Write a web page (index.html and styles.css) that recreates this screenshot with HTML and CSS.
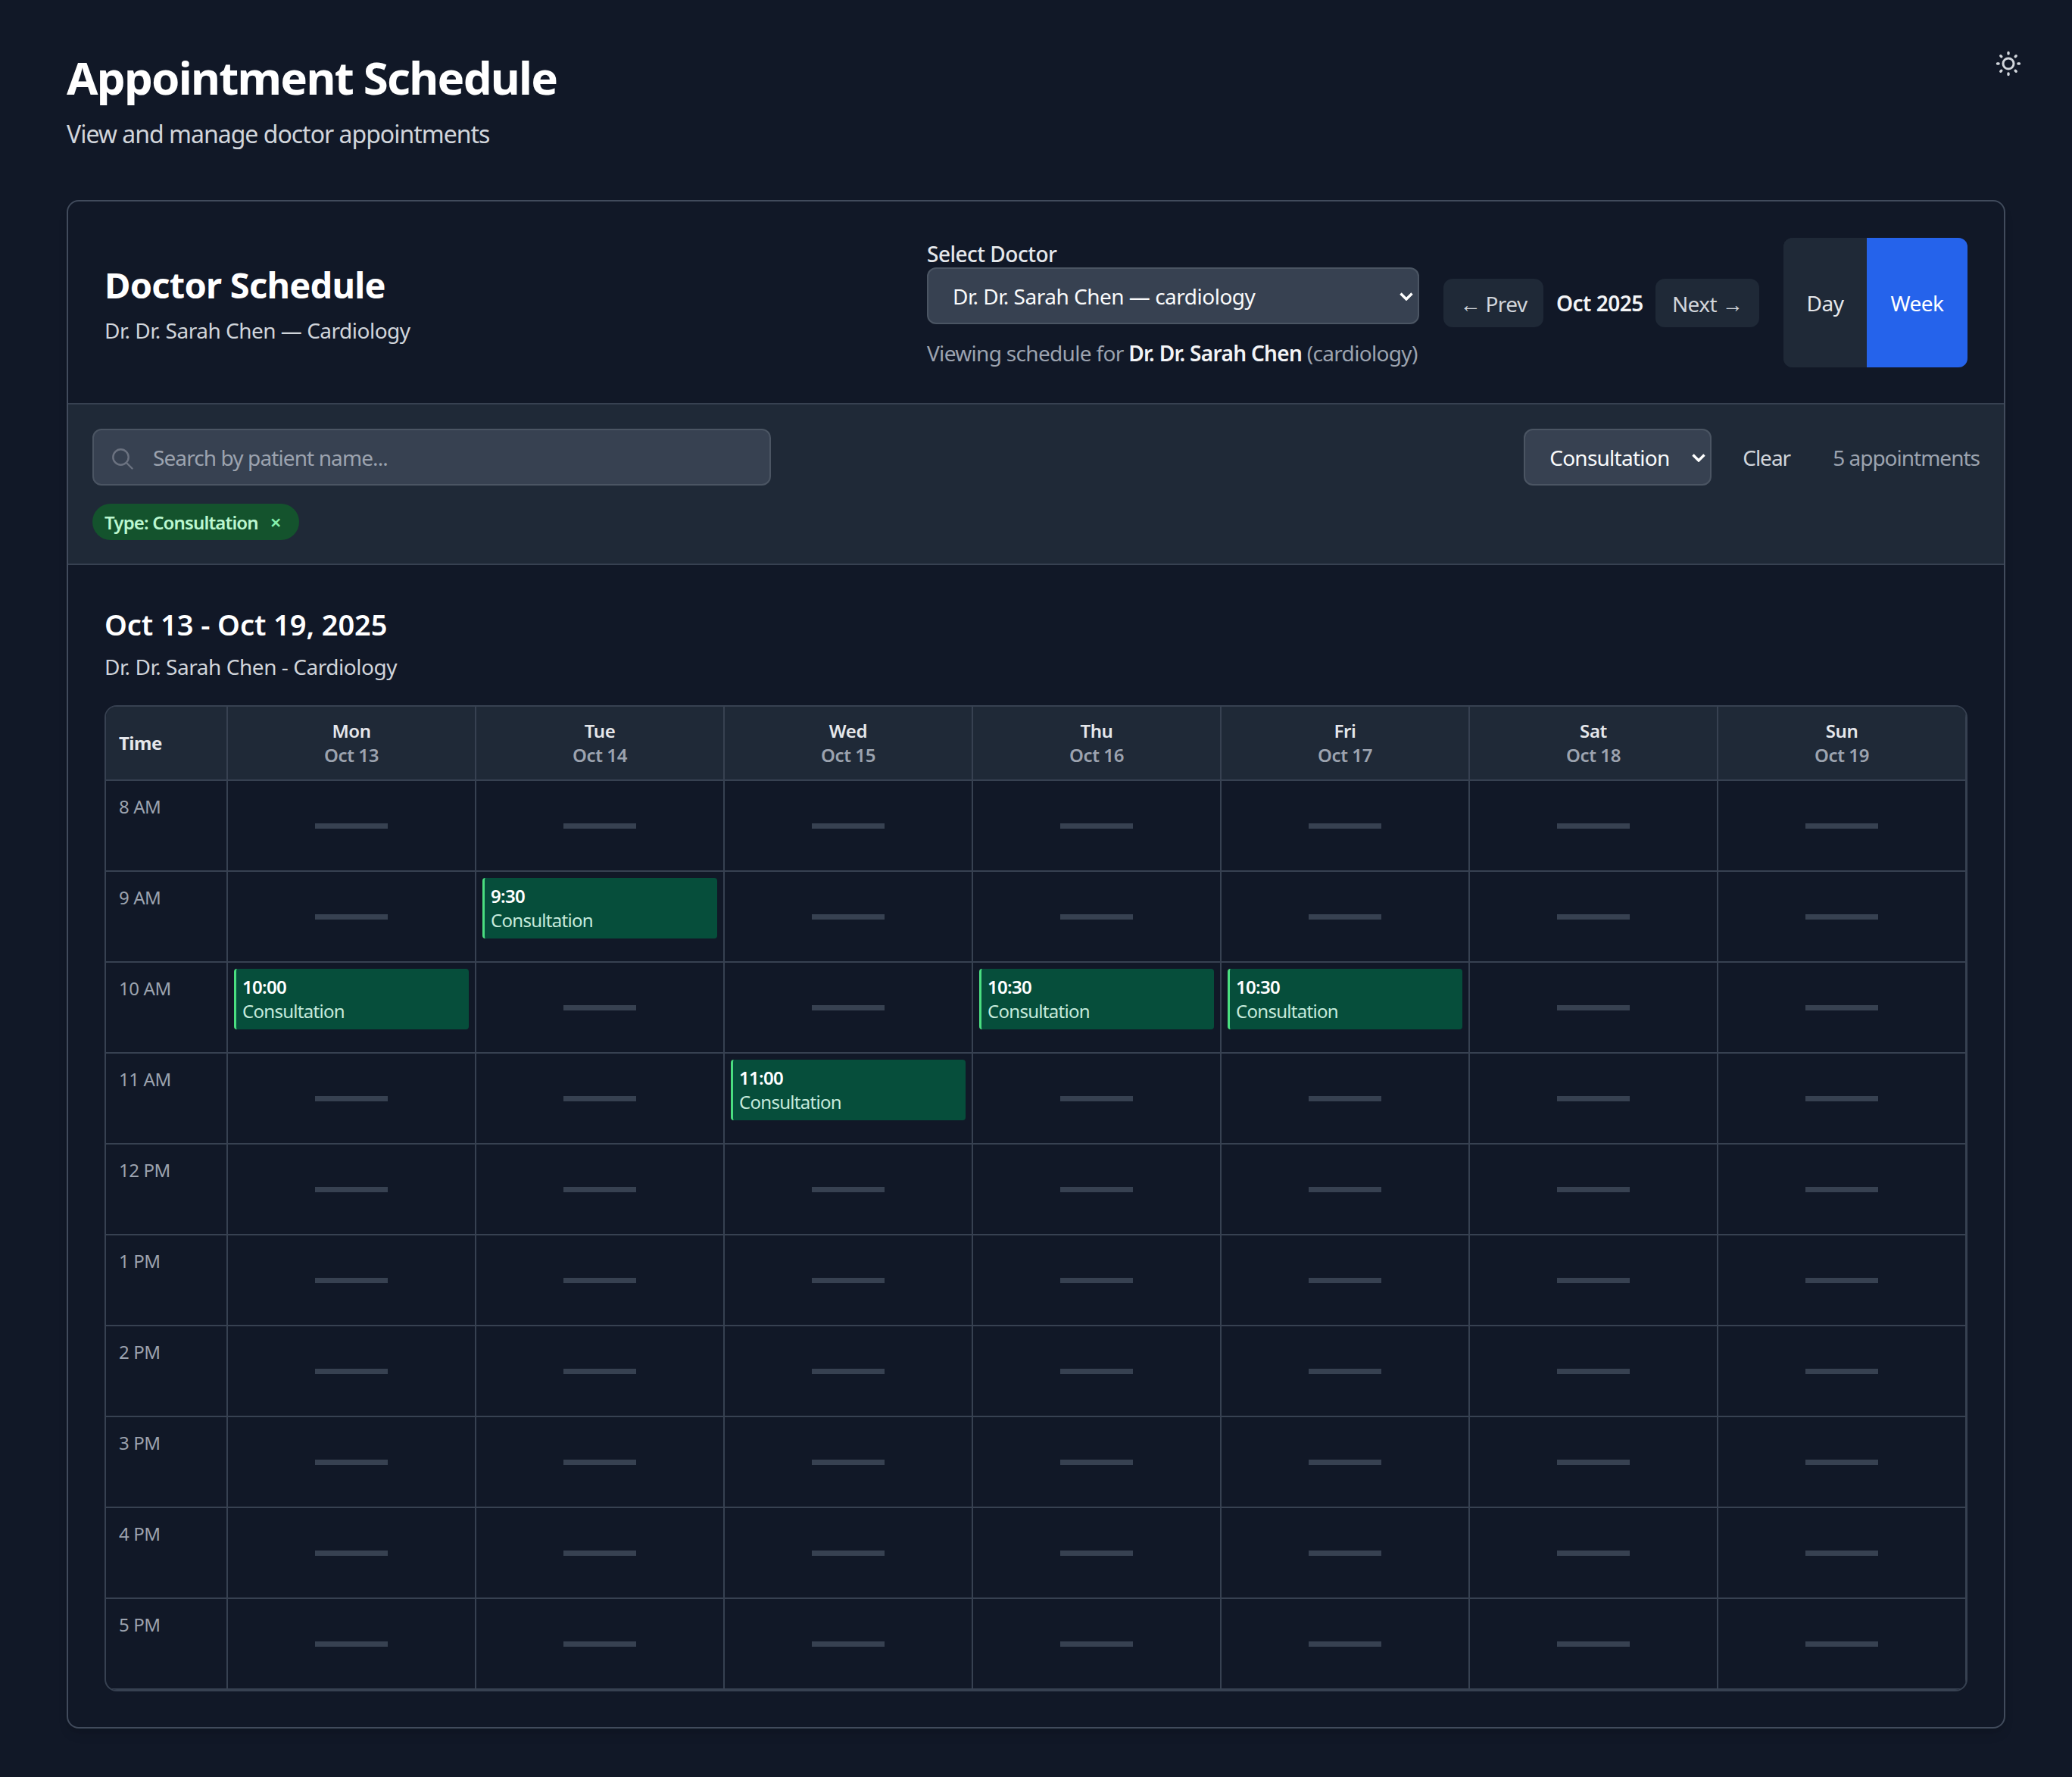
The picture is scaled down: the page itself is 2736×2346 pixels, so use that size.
FILE: index.html
```html
<!DOCTYPE html>
<html lang="en">
<head>
<meta charset="utf-8">
<title>Appointment Schedule</title>
<link rel="stylesheet" href="styles.css">
</head>
<body>
<button class="theme" aria-label="Toggle theme">
  <svg viewBox="0 0 34 34" width="34" height="34" fill="none" stroke="currentColor" stroke-width="3.4" stroke-linecap="round">
    <circle cx="17" cy="17" r="7" stroke-width="3"/>
    <path d="M17 2.5v1.6M17 29.9v1.6M2.5 17h1.6M29.9 17h1.6M6.8 6.8l1 1M26.2 26.2l1 1M6.8 27.2l1-1M26.2 7.8l1-1"/>
  </svg>
</button>
<header class="page-head">
  <h1>Appointment Schedule</h1>
  <p>View and manage doctor appointments</p>
</header>
<main class="card">
  <section class="card-head">
    <div class="head-title">
      <h2>Doctor Schedule</h2>
      <p>Dr. Dr. Sarah Chen — Cardiology</p>
    </div>
    <div class="head-tools">
      <div class="doctor">
        <label class="doctor-label" for="doc">Select Doctor</label>
        <div class="select-wrap">
          <select id="doc" class="select doctor-select"><option>Dr. Dr. Sarah Chen — cardiology</option></select>
          <svg class="chevron" viewBox="0 0 18 11" width="18" height="11" fill="none" stroke="currentColor" stroke-width="3.4"><path d="M1.5 1.5L9 9l7.5-7.5"/></svg>
        </div>
        <p class="viewing">Viewing schedule for <strong>Dr. Dr. Sarah Chen</strong> (cardiology)</p>
      </div>
      <div class="nav">
        <button class="nav-btn nav-prev">← Prev</button>
        <span class="nav-month">Oct 2025</span>
        <button class="nav-btn nav-next">Next →</button>
      </div>
      <div class="toggle">
        <button class="toggle-btn toggle-day">Day</button>
        <button class="toggle-btn toggle-week">Week</button>
      </div>
    </div>
  </section>
  <section class="filters">
    <div class="filter-row">
      <div class="search">
        <svg class="search-icon" viewBox="0 0 28 28" width="28" height="28" fill="none" stroke="currentColor" stroke-width="2.4" stroke-linecap="round"><circle cx="11.5" cy="11.5" r="10.2"/><path d="M19 19l7.5 7.5"/></svg>
        <input class="search-input" type="text" placeholder="Search by patient name...">
      </div>
      <div class="filter-right">
        <div class="select-wrap">
          <select class="select type-select"><option>Consultation</option></select>
          <svg class="chevron" viewBox="0 0 18 11" width="18" height="11" fill="none" stroke="currentColor" stroke-width="3.4"><path d="M1.5 1.5L9 9l7.5-7.5"/></svg>
        </div>
        <button class="clear">Clear</button>
        <span class="count">5 appointments</span>
      </div>
    </div>
    <div class="pills"><span class="pill">Type: Consultation <span class="pill-x">×</span></span></div>
  </section>
  <section class="schedule">
    <h3>Oct 13 - Oct 19, 2025</h3>
    <p class="schedule-sub">Dr. Dr. Sarah Chen - Cardiology</p>
    <div class="grid">
      <div class="th th-time">Time</div>
      <div class="th"><b>Mon</b><span>Oct 13</span></div>
      <div class="th"><b>Tue</b><span>Oct 14</span></div>
      <div class="th"><b>Wed</b><span>Oct 15</span></div>
      <div class="th"><b>Thu</b><span>Oct 16</span></div>
      <div class="th"><b>Fri</b><span>Oct 17</span></div>
      <div class="th"><b>Sat</b><span>Oct 18</span></div>
      <div class="th"><b>Sun</b><span>Oct 19</span></div>

      <div class="time">8 AM</div>
      <div class="cell"><i class="dash"></i></div><div class="cell"><i class="dash"></i></div><div class="cell"><i class="dash"></i></div><div class="cell"><i class="dash"></i></div><div class="cell"><i class="dash"></i></div><div class="cell"><i class="dash"></i></div><div class="cell"><i class="dash"></i></div>

      <div class="time">9 AM</div>
      <div class="cell"><i class="dash"></i></div>
      <div class="cell"><div class="appt"><b>9:30</b><span>Consultation</span></div></div>
      <div class="cell"><i class="dash"></i></div><div class="cell"><i class="dash"></i></div><div class="cell"><i class="dash"></i></div><div class="cell"><i class="dash"></i></div><div class="cell"><i class="dash"></i></div>

      <div class="time">10 AM</div>
      <div class="cell"><div class="appt"><b>10:00</b><span>Consultation</span></div></div>
      <div class="cell"><i class="dash"></i></div><div class="cell"><i class="dash"></i></div>
      <div class="cell"><div class="appt"><b>10:30</b><span>Consultation</span></div></div>
      <div class="cell"><div class="appt"><b>10:30</b><span>Consultation</span></div></div>
      <div class="cell"><i class="dash"></i></div><div class="cell"><i class="dash"></i></div>

      <div class="time">11 AM</div>
      <div class="cell"><i class="dash"></i></div><div class="cell"><i class="dash"></i></div>
      <div class="cell"><div class="appt"><b>11:00</b><span>Consultation</span></div></div>
      <div class="cell"><i class="dash"></i></div><div class="cell"><i class="dash"></i></div><div class="cell"><i class="dash"></i></div><div class="cell"><i class="dash"></i></div>

      <div class="time">12 PM</div>
      <div class="cell"><i class="dash"></i></div><div class="cell"><i class="dash"></i></div><div class="cell"><i class="dash"></i></div><div class="cell"><i class="dash"></i></div><div class="cell"><i class="dash"></i></div><div class="cell"><i class="dash"></i></div><div class="cell"><i class="dash"></i></div>

      <div class="time">1 PM</div>
      <div class="cell"><i class="dash"></i></div><div class="cell"><i class="dash"></i></div><div class="cell"><i class="dash"></i></div><div class="cell"><i class="dash"></i></div><div class="cell"><i class="dash"></i></div><div class="cell"><i class="dash"></i></div><div class="cell"><i class="dash"></i></div>

      <div class="time">2 PM</div>
      <div class="cell"><i class="dash"></i></div><div class="cell"><i class="dash"></i></div><div class="cell"><i class="dash"></i></div><div class="cell"><i class="dash"></i></div><div class="cell"><i class="dash"></i></div><div class="cell"><i class="dash"></i></div><div class="cell"><i class="dash"></i></div>

      <div class="time">3 PM</div>
      <div class="cell"><i class="dash"></i></div><div class="cell"><i class="dash"></i></div><div class="cell"><i class="dash"></i></div><div class="cell"><i class="dash"></i></div><div class="cell"><i class="dash"></i></div><div class="cell"><i class="dash"></i></div><div class="cell"><i class="dash"></i></div>

      <div class="time">4 PM</div>
      <div class="cell"><i class="dash"></i></div><div class="cell"><i class="dash"></i></div><div class="cell"><i class="dash"></i></div><div class="cell"><i class="dash"></i></div><div class="cell"><i class="dash"></i></div><div class="cell"><i class="dash"></i></div><div class="cell"><i class="dash"></i></div>

      <div class="time">5 PM</div>
      <div class="cell"><i class="dash"></i></div><div class="cell"><i class="dash"></i></div><div class="cell"><i class="dash"></i></div><div class="cell"><i class="dash"></i></div><div class="cell"><i class="dash"></i></div><div class="cell"><i class="dash"></i></div><div class="cell"><i class="dash"></i></div>
    </div>
  </section>
</main>
</body>
</html>
```

FILE: styles.css
```css
* { box-sizing: border-box; }
html, body { margin: 0; background: #111827; }
body {
  position: relative;
  height: 2346px;
  overflow: hidden;
  padding: 62px 88px 0;
  font-family: "Noto Sans", "Open Sans", sans-serif;
  color: #f9fafb;
}
h1, h2, h3, p { margin: 0; }
button, select, input { font-family: inherit; }

.theme {
  position: absolute;
  top: 67px;
  left: 2635px;
  width: 34px;
  height: 34px;
  padding: 0;
  border: 0;
  background: none;
  color: #d1d5db;
}
.theme svg { display: block; }

.page-head { height: 202px; }
.page-head h1 { font-size: 60px; line-height: 80px; font-weight: 700; color: #fff; letter-spacing: -1.75px; }
.page-head p { margin-top: 13px; font-size: 32px; line-height: 44px; color: #d1d5db; letter-spacing: -1px; }

.card {
  width: 2560px;
  height: 2018px;
  border: 2px solid #414b5c;
  border-radius: 16px;
  background: #111827;
  box-shadow: 0 10px 15px -3px rgba(0, 0, 0, 0.1), 0 4px 6px -2px rgba(0, 0, 0, 0.05);
}

.card-head {
  display: flex;
  align-items: center;
  justify-content: space-between;
  height: 266px;
  padding: 0 48px;
}
.head-title { padding-top: 2px; }
.head-title h2 { font-size: 47px; line-height: 64px; font-weight: 700; color: #fff; letter-spacing: -0.75px; }
.head-title p { margin-top: 8px; font-size: 28px; line-height: 40px; color: #d1d5db; letter-spacing: -0.5px; }
.head-tools { display: flex; align-items: center; gap: 32px; }

.doctor { width: 650px; padding-top: 5px; }
.doctor-label { display: block; font-size: 28px; line-height: 36px; font-weight: 500; color: #e5e7eb; letter-spacing: -0.5px; }
.select-wrap { position: relative; }
.chevron { position: absolute; top: 33px; right: 8px; color: #fff; pointer-events: none; }
.select {
  appearance: none;
  -webkit-appearance: none;
  display: block;
  height: 75px;
  border: 2px solid #4b5563;
  border-radius: 12px;
  background-color: #374151;
  color: #f9fafb;
  font-size: 28px;
  letter-spacing: -0.5px;
}
.doctor-select { width: 100%; padding: 0 40px 0 32px; }
.viewing { margin-top: 18px; font-size: 28px; line-height: 40px; color: #9ca3af; white-space: nowrap; letter-spacing: -0.68px; }
.viewing strong { color: #f3f4f6; font-weight: 600; }

.nav { display: flex; align-items: center; gap: 17px; margin-top: 2px; }
.nav-btn {
  height: 64px;
  padding: 2px 0 0;
  border: 0;
  border-radius: 12px;
  background: #1f2937;
  color: #d1d5db;
  font-size: 28px;
  letter-spacing: -0.6px;
  white-space: nowrap;
}
.nav-prev { width: 132px; }
.nav-next { width: 137px; }
.nav-month { width: 114px; font-size: 28px; font-weight: 600; color: #f3f4f6; white-space: nowrap; letter-spacing: -0.5px; }

.toggle { display: flex; height: 171px; border-radius: 12px; overflow: hidden; background: #1f2937; }
.toggle-btn {
  padding: 2px 0 0;
  border: 0;
  background: #1f2937;
  color: #e5e7eb;
  font-size: 28px;
  letter-spacing: -0.5px;
}
.toggle-day { width: 110px; }
.toggle-week { width: 133px; background: #2563eb; color: #fff; }

.filters {
  height: 214px;
  padding: 32px 32px 0;
  border-top: 2px solid #374151;
  border-bottom: 2px solid #374151;
  background: #1f2937;
}
.filter-row { display: flex; align-items: center; justify-content: space-between; }
.search { position: relative; width: 896px; }
.search-icon { position: absolute; top: 26px; left: 26px; color: #6b7280; }
.search-input {
  display: block;
  width: 100%;
  height: 75px;
  padding: 0 32px 0 78px;
  border: 2px solid #4b5563;
  border-radius: 12px;
  background: #374151;
  color: #f9fafb;
  font-size: 28px;
  letter-spacing: -0.9px;
}
.search-input::placeholder { color: #9ca3af; opacity: 1; }
.filter-right { display: flex; align-items: center; }
.type-select { width: 248px; padding: 0 12px 0 32px; letter-spacing: -0.75px; }
.clear {
  margin-left: 41px;
  padding: 0;
  border: 0;
  background: none;
  color: #d1d5db;
  font-size: 28px;
  letter-spacing: -1px;
}
.count { margin-left: 56px; font-size: 28px; color: #9ca3af; letter-spacing: -1px; }

.pills { display: flex; margin-top: 24px; }
.pill {
  display: flex;
  align-items: center;
  gap: 16px;
  height: 48px;
  padding: 0 24px 0 16px;
  border-radius: 24px;
  background: #14532d;
  color: #bbf7d0;
  font-size: 24px;
  font-weight: 600;
  letter-spacing: -0.85px;
  white-space: nowrap;
}
.pill-x { color: #86efac; font-size: 26px; line-height: 1; }

.schedule { padding: 50px 48px 0; }
.schedule h3 { font-size: 38px; line-height: 56px; font-weight: 600; color: #fff; letter-spacing: -0.07px; }
.schedule-sub { margin-top: 8px; font-size: 28px; line-height: 40px; color: #d1d5db; letter-spacing: -0.45px; }

.grid {
  display: grid;
  grid-template-columns: 161px repeat(7, 328px);
  grid-auto-rows: 120px;
  grid-template-rows: 98px;
  margin-top: 31px;
  border: 2px solid #374151;
  border-radius: 16px;
  overflow: hidden;
}
.th {
  display: flex;
  flex-direction: column;
  align-items: center;
  justify-content: center;
  border-right: 2px solid #374151;
  border-bottom: 2px solid #374151;
  background: #1f2937;
  font-size: 24px;
  line-height: 32px;
}
.th b { font-weight: 600; color: #e5e7eb; letter-spacing: -0.4px; }
.th span { font-weight: 600; color: #9ca3af; letter-spacing: -0.4px; }
.th-time { align-items: flex-start; padding-left: 17px; font-weight: 700; color: #e5e7eb; letter-spacing: -0.5px; }
.time {
  padding: 18px 0 0 17px;
  border-right: 2px solid #374151;
  border-bottom: 2px solid #374151;
  font-size: 24px;
  line-height: 32px;
  color: #9ca3af;
  letter-spacing: -0.4px;
}
.cell {
  display: flex;
  align-items: center;
  justify-content: center;
  padding: 8px;
  border-right: 2px solid #374151;
  border-bottom: 2px solid #374151;
}
.dash { display: block; width: 96px; height: 7px; background: #374151; }
.appt {
  align-self: stretch;
  display: flex;
  flex-direction: column;
  justify-content: center;
  width: 100%;
  height: 80px;
  padding-left: 8px;
  border-left: 3px solid #4ade80;
  border-radius: 4px;
  background: #064e3b;
  font-size: 24px;
  line-height: 32px;
  letter-spacing: -0.7px;
}
.appt b { font-weight: 600; color: #fff; }
.appt span { color: #c6eadc; }
```
